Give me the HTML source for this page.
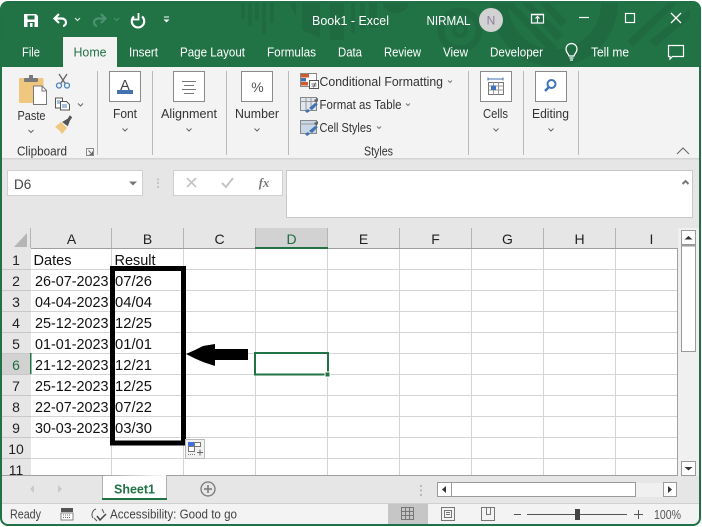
<!DOCTYPE html>
<html><head><meta charset="utf-8"><style>
html,body{margin:0;padding:0;background:#fff;width:702px;height:527px;overflow:hidden}
svg{display:block}
text{font-family:"Liberation Sans",sans-serif;font-size:12.5px;fill:#333}
.t text{fill:#fff}
.h{font-size:14px;fill:#222;text-anchor:middle}
.c{font-size:14.300px;fill:#111}
.m{text-anchor:middle}
</style></head><body>
<svg width="702" height="527" viewBox="0 0 702 527" xmlns="http://www.w3.org/2000/svg">
<rect x="0" y="0" width="702" height="527" fill="#fff"/>
<rect x="1" y="2" width="699" height="523" rx="7" fill="#e6e6e6" stroke="#217346" stroke-width="2"/>
<path d="M1 67V9a7 7 0 0 1 7-7H693a7 7 0 0 1 7 7V67Z" fill="#217346"/>
<g fill="#1f6a41"><rect x="241" y="3" width="4" height="16"/><rect x="248" y="3" width="4" height="23"/><rect x="255" y="3" width="4" height="17"/><rect x="262" y="3" width="4" height="32"/><rect x="270" y="3" width="4" height="20"/><path d="M289 3h7v13zM302 3h18v35l-18-8zM330 3h14v37h-14zM351 3h4v30h-4zM360 3h5v26h-5zM369 3h8v25h-8zM383 3c3 14 22 14 26 0z"/>
<circle cx="460" cy="30" r="19" fill="none" stroke="#1f6a41" stroke-width="7"/><circle cx="460" cy="30" r="6" fill="none" stroke="#1f6a41" stroke-width="4"/>
<path d="M491 3A60 60 0 0 0 618 3H601A44 44 0 0 1 508 3Z"/>
<path d="M504 3h9l44 44-6 6zM522 3h9l32 32-6 6zM540 3h9l18 18-6 6zM668 3h9L633 47l-6-6zM690 9v9L655 47l-6-6z"/></g>
<!-- QAT -->
<path d="M24 14H36L38 16V27H24Z" fill="#fff"/><rect x="27.500" y="15.500" width="7" height="4" fill="#217346"/><rect x="27.500" y="22" width="7" height="5" fill="#217346"/><rect x="30" y="23" width="2.500" height="4" fill="#fff"/>
<g fill="none" stroke="#fff" stroke-width="2.200"><path d="M59 14l-4.500 4.500 4.500 4.500M55 18.500h7a4 4 0 0 1 4 4 3.500 3.500 0 0 1-3 3.500"/><path d="M134 16.500a6.200 6.200 0 1 0 8 0"/><path d="M138.500 13v6.500h-6" stroke-width="1.800"/></g>
<path d="M75 18l2.500 2.500L80 18" fill="none" stroke="#d5e4da" stroke-width="1.200"/>
<g fill="none" stroke="#4d9270" stroke-width="2.200"><path d="M101 14l4.500 4.500-4.500 4.500M105 18.500H98a4 4 0 0 0-4 4 3.500 3.500 0 0 0 3 3.500"/></g>
<path d="M114 18l2.500 2.500L119 18" fill="none" stroke="#4d9270"/>
<path d="M164 17h5" stroke="#fff" fill="none"/><path d="M163.500 19.500h6l-3 3z" fill="#fff"/>
<g class="t">
<text x="312" y="25" textLength="77" lengthAdjust="spacingAndGlyphs">Book1  -  Excel</text>
<text x="426.500" y="25" textLength="44" lengthAdjust="spacingAndGlyphs">NIRMAL</text>
<text x="22" y="56.500" textLength="18" lengthAdjust="spacingAndGlyphs">File</text>
<text x="129" y="56.500" textLength="29" lengthAdjust="spacingAndGlyphs">Insert</text>
<text x="180" y="56.500" textLength="65" lengthAdjust="spacingAndGlyphs">Page Layout</text>
<text x="267" y="56.500" textLength="49" lengthAdjust="spacingAndGlyphs">Formulas</text>
<text x="338" y="56.500" textLength="24" lengthAdjust="spacingAndGlyphs">Data</text>
<text x="384" y="56.500" textLength="37" lengthAdjust="spacingAndGlyphs">Review</text>
<text x="443" y="56.500" textLength="25" lengthAdjust="spacingAndGlyphs">View</text>
<text x="490" y="56.500" textLength="53" lengthAdjust="spacingAndGlyphs">Developer</text>
<text x="591" y="56.500" textLength="38" lengthAdjust="spacingAndGlyphs">Tell me</text>
</g>
<circle cx="491" cy="20" r="12" fill="#d2d2d2"/><text x="491" y="24.500" class="m" style="fill:#8a7f9a;font-size:12px">N</text>
<g fill="none" stroke="#fff" stroke-width="1.200"><rect x="531.500" y="14.500" width="12" height="8.500"/><path d="M537.500 22.500v-5.500M535.500 18.500l2-2 2 2"/><path d="M531 14.500h13" stroke-width="1.500"/><path d="M579 17.500h10"/><rect x="625.500" y="13.500" width="9" height="9"/><path d="M671 13l10 10M681 13l-10 10" stroke-width="1.300"/><path d="M569 56c0-2-3-3-3-7a5.500 5.500 0 0 1 11 0c0 4-3 5-3 7zM569.500 58h4M570 60h3"/><path d="M668.500 45.500h15v11h-11l-2.500 2.500v-2.500h-1.500z"/></g>
<!-- Ribbon -->
<rect x="2" y="67" width="697" height="92" fill="#f3f3f3"/>
<rect x="2" y="158" width="697" height="1.500" fill="#d4d4d4"/>
<rect x="63" y="37" width="54" height="31" fill="#f3f3f3"/>
<text x="73.500" y="56.500" textLength="33" lengthAdjust="spacingAndGlyphs" style="fill:#217346">Home</text>
<g fill="#b9b9b9"><rect x="97" y="71" width="1" height="84"/><rect x="152" y="71" width="1" height="84"/><rect x="226" y="71" width="1" height="84"/><rect x="288" y="71" width="1" height="84"/><rect x="468" y="71" width="1" height="84"/><rect x="523" y="71" width="1" height="84"/><rect x="578" y="71" width="1" height="84"/></g>
<!-- Clipboard -->
<rect x="19" y="78" width="24.500" height="25" rx="1" fill="#efc77f"/>
<rect x="24" y="78" width="14" height="4" rx="1" fill="#7a7a7a"/><rect x="29" y="75" width="4" height="3.500" fill="#7a7a7a"/>
<path d="M33.500 86H42L46.500 90.500V104.500H33.500Z" fill="#fff" stroke="#777"/>
<path d="M42 86v5h4.500" fill="none" stroke="#777"/>
<text x="17.500" y="120" textLength="28" lengthAdjust="spacingAndGlyphs">Paste</text>
<path d="M28.500 130l2.500 2.500 2.500-2.500" fill="none" stroke="#666"/>
<g fill="none" stroke="#666" stroke-width="1.300"><path d="M59 74l6.500 10M67 74l-6.500 10"/></g>
<g fill="none" stroke="#4b82bd" stroke-width="1.300"><circle cx="59" cy="85.500" r="2.500"/><circle cx="67" cy="85.500" r="2.500"/></g>
<g fill="#fff" stroke="#555"><rect x="55.500" y="98" width="7" height="10"/><path d="M60.500 101.500h6l3 3v5.500h-9z"/></g><path d="M62 105h5M62 107h5M57 101h3M57 103h3" stroke="#4b82bd"/>
<path d="M78 103.500l2.500 2.500 2.500-2.500" fill="none" stroke="#666"/>
<path d="M55 127l6-5 6 6-5 6c-2-3-4-5-7-7z" fill="#efc77f"/><path d="M63 122l5-3 2-3 1.500 1.500-2 3-2 5z" fill="#555" stroke="#555"/>
<text x="17" y="155.500" textLength="50" lengthAdjust="spacingAndGlyphs">Clipboard</text>
<path d="M86.500 148.500h7v7h-7z" fill="none" stroke="#888"/><path d="M88.500 150.500l4 4M92.500 151.500v3h-3" fill="none" stroke="#666"/>
<!-- Big group buttons -->
<g fill="#fff" stroke="#8a8a8a"><rect x="109.500" y="71.500" width="31" height="30"/><rect x="173.500" y="71.500" width="31" height="30"/><rect x="241.500" y="71.500" width="31" height="30"/><rect x="480.500" y="71.500" width="31" height="30"/><rect x="535.500" y="71.500" width="31" height="30"/></g>
<text x="125" y="90" class="m" style="font-size:14.500px;fill:#444">A</text><rect x="117" y="90" width="16" height="4" fill="#4272b0"/>
<path d="M182 81.500h14M184 85.500h10M182 89.500h14M184 93.500h10" stroke="#777" fill="none"/>
<text x="257.500" y="92" class="m" style="font-size:14px;fill:#555">%</text>
<text x="113" y="118" textLength="24" lengthAdjust="spacingAndGlyphs">Font</text>
<text x="161" y="118" textLength="56" lengthAdjust="spacingAndGlyphs">Alignment</text>
<text x="235" y="118" textLength="44" lengthAdjust="spacingAndGlyphs">Number</text>
<text x="483" y="118" textLength="25" lengthAdjust="spacingAndGlyphs">Cells</text>
<text x="532" y="118" textLength="37" lengthAdjust="spacingAndGlyphs">Editing</text>
<g fill="none" stroke="#666"><path d="M122.500 128.500l2.500 2.500 2.500-2.500M186.500 128.500l2.500 2.500 2.500-2.500M254.500 128.500l2.500 2.500 2.500-2.500M493.500 128.500l2.500 2.500 2.500-2.500M548.500 128.500l2.500 2.500 2.500-2.500"/></g>
<!-- Styles -->
<rect x="300.500" y="73.500" width="16" height="13" fill="#fff" stroke="#888"/><rect x="301" y="74" width="8" height="3.500" fill="#d1592e"/><rect x="301" y="78" width="5" height="3.500" fill="#4272b0"/><rect x="301" y="82" width="7" height="3.500" fill="#d1592e"/>
<rect x="309.500" y="80.500" width="9" height="8" fill="#fff" stroke="#555"/><path d="M311.500 84h5M311.500 86h5M315.500 82.500l-2 5" stroke="#444" stroke-width=".7"/>
<g><rect x="300.500" y="97.500" width="16" height="13" fill="#dfe6f0" stroke="#888"/><path d="M300.500 101.500h16M306 97.500v13M311 97.500v13" stroke="#999" fill="none"/><rect x="300.500" y="120.500" width="16" height="13" fill="#c8d6e8" stroke="#888"/><path d="M300.500 124h16" stroke="#999"/>
<path d="M309 108l6-5 3 1-6 6zM305 111l3-2 2 2-3 2z" fill="#4272b0"/><path d="M309 131l6-5 3 1-6 6zM305 134l3-2 2 2-3 2z" fill="#4272b0"/><path d="M314 100l4-2v3l-2 2z" fill="#666"/><path d="M314 123l4-2v3l-2 2z" fill="#666"/></g>
<text x="319.500" y="86" textLength="123.500" lengthAdjust="spacingAndGlyphs">Conditional Formatting</text>
<text x="319.500" y="109" textLength="82" lengthAdjust="spacingAndGlyphs">Format as Table</text>
<text x="319.500" y="132" textLength="52" lengthAdjust="spacingAndGlyphs">Cell Styles</text>
<g fill="none" stroke="#777"><path d="M448 80.500l2 2 2-2M406 103.500l2 2 2-2M377 126.500l2 2 2-2"/></g>
<text x="364" y="155.500" textLength="29" lengthAdjust="spacingAndGlyphs">Styles</text>
<!-- cells icon -->
<rect x="488.500" y="82.500" width="15" height="12" fill="#fff" stroke="#777"/><path d="M488.500 86h15M488.500 90h15M493.500 82.500v12M498.500 82.500v12" stroke="#999" fill="none"/><rect x="491" y="85.500" width="5" height="4.500" fill="#3f74b8"/><path d="M488 79h15M488 77.500v3M503 77.500v3" stroke="#4272b0" fill="none"/>
<circle cx="551.500" cy="84" r="4" fill="none" stroke="#3f74b8" stroke-width="2"/><path d="M548.500 87.500l-3.500 3.500" stroke="#3f74b8" stroke-width="2.500"/>
<path d="M677 154l6-6 6 6" fill="none" stroke="#666"/>
<!-- Formula bar -->
<rect x="7.500" y="170.500" width="135" height="25" fill="#fff" stroke="#d0d0d0"/>
<text x="14" y="189" style="font-size:13.500px;fill:#444">D6</text>
<path d="M129 181.500h8l-4 4z" fill="#777"/>
<path d="M158 178.500v2M158 182v2M158 186v2" stroke="#b8b8b8" stroke-width="1.500"/>
<rect x="173.500" y="170.500" width="109" height="25" fill="#fff" stroke="#d0d0d0"/>
<path d="M187 178l9 9M196 178l-9 9" stroke="#c4c4c4" stroke-width="1.600" fill="none"/>
<path d="M222 183l4 4 7-9" stroke="#c4c4c4" stroke-width="2" fill="none"/>
<text x="264" y="187" class="m" style="font-family:'Liberation Serif',serif;font-size:12.500px;font-style:italic;font-weight:bold;fill:#777">fx</text>
<rect x="286.500" y="170.500" width="406" height="47" fill="#fff" stroke="#c8c8c8"/>
<path d="M682.500 184l3-3 3 3" fill="none" stroke="#777" stroke-width="2"/>
<!-- Sheet -->
<rect x="2" y="228" width="675" height="20" fill="#e6e6e6"/>
<rect x="2" y="248" width="29" height="227" fill="#e6e6e6"/>
<rect x="31" y="249" width="646" height="226" fill="#fff"/>
<rect x="255" y="228" width="73" height="20" fill="#d2d2d2"/>
<rect x="2" y="353" width="29" height="21" fill="#d2d2d2"/>
<path d="M27 233V247H14Z" fill="#b5b5b5"/>
<path d="M31 269.500H677M31 290.500H677M31 311.500H677M31 332.500H677M31 353.500H677M31 374.500H677M31 395.500H677M31 416.500H677M31 437.500H677M31 458.500H677M111.500 249V475M183.500 249V475M255.500 249V475M327.500 249V475M399.500 249V475M471.500 249V475M543.500 249V475M615.500 249V475" stroke="#d4d4d4" fill="none"/>
<path d="M2 269.500H31M2 290.500H31M2 311.500H31M2 332.500H31M2 353.500H31M2 374.500H31M2 395.500H31M2 416.500H31M2 437.500H31M2 458.500H31" stroke="#c8c8c8" fill="none"/>
<path d="M30.500 228V248M111.500 228V248M183.500 228V248M255.500 228V248M327.500 228V248M399.500 228V248M471.500 228V248M543.500 228V248M615.500 228V248" stroke="#b4b4b4" fill="none"/>
<path d="M31 248.500H677M677.500 248V476M2 475.500H677" stroke="#a0a0a0" fill="none"/>
<rect x="30" y="353" width="1.500" height="21" fill="#217346"/><rect x="255" y="247" width="73" height="2" fill="#217346"/>
<g><text class="h" x="71.500" y="244">A</text><text class="h" x="147.500" y="244">B</text><text class="h" x="219.500" y="244">C</text><text class="h" x="291.500" y="244" style="fill:#1f6b42">D</text><text class="h" x="363.500" y="244">E</text><text class="h" x="435.500" y="244">F</text><text class="h" x="507.500" y="244">G</text><text class="h" x="579.500" y="244">H</text><text class="h" x="651.500" y="244">I</text>
<text class="h" x="16" y="265">1</text><text class="h" x="16" y="286">2</text><text class="h" x="16" y="307">3</text><text class="h" x="16" y="328">4</text><text class="h" x="16" y="349">5</text><text class="h" x="16" y="370" style="fill:#1f6b42">6</text><text class="h" x="16" y="391">7</text><text class="h" x="16" y="412">8</text><text class="h" x="16" y="433">9</text><text class="h" x="16" y="454">10</text><text class="h" x="16" y="475">11</text></g>
<text class="c" x="33.500" y="265" textLength="38" lengthAdjust="spacingAndGlyphs">Dates</text><text class="c" x="114.500" y="265" textLength="41" lengthAdjust="spacingAndGlyphs">Result</text>
<text class="c" x="35" y="286" textLength="73.500" lengthAdjust="spacingAndGlyphs">26-07-2023</text><text class="c" x="115" y="286" textLength="37" lengthAdjust="spacingAndGlyphs">07/26</text>
<text class="c" x="35" y="307" textLength="73.500" lengthAdjust="spacingAndGlyphs">04-04-2023</text><text class="c" x="115" y="307" textLength="37" lengthAdjust="spacingAndGlyphs">04/04</text>
<text class="c" x="35" y="328" textLength="73.500" lengthAdjust="spacingAndGlyphs">25-12-2023</text><text class="c" x="115" y="328" textLength="37" lengthAdjust="spacingAndGlyphs">12/25</text>
<text class="c" x="35" y="349" textLength="73.500" lengthAdjust="spacingAndGlyphs">01-01-2023</text><text class="c" x="115" y="349" textLength="37" lengthAdjust="spacingAndGlyphs">01/01</text>
<text class="c" x="35" y="370" textLength="73.500" lengthAdjust="spacingAndGlyphs">21-12-2023</text><text class="c" x="115" y="370" textLength="37" lengthAdjust="spacingAndGlyphs">12/21</text>
<text class="c" x="35" y="391" textLength="73.500" lengthAdjust="spacingAndGlyphs">25-12-2023</text><text class="c" x="115" y="391" textLength="37" lengthAdjust="spacingAndGlyphs">12/25</text>
<text class="c" x="35" y="412" textLength="73.500" lengthAdjust="spacingAndGlyphs">22-07-2023</text><text class="c" x="115" y="412" textLength="37" lengthAdjust="spacingAndGlyphs">07/22</text>
<text class="c" x="35" y="433" textLength="73.500" lengthAdjust="spacingAndGlyphs">30-03-2023</text><text class="c" x="115" y="433" textLength="37" lengthAdjust="spacingAndGlyphs">03/30</text>
<!-- selection -->
<rect x="255" y="353" width="73" height="21.500" fill="none" stroke="#217346" stroke-width="2"/>
<rect x="325" y="372" width="5" height="5" fill="#217346" stroke="#fff"/>
<!-- black annotation -->
<rect x="112.500" y="268.500" width="71" height="174.500" fill="none" stroke="#000" stroke-width="5"/>
<path d="M186 354L195 350L203 346L215 344V349H248V360H215V366L203 362L195 358.500Z" fill="#000"/>
<!-- paste options -->
<rect x="185.500" y="439.500" width="19" height="19" fill="#f2f2f2" stroke="#bbb"/>
<rect x="188.500" y="442.500" width="6" height="4" fill="#3f74dc" stroke="#3f74dc"/><rect x="194.500" y="442.500" width="6" height="4" fill="#fff" stroke="#777"/><rect x="188.500" y="446.500" width="6" height="5" fill="#fff" stroke="#777"/>
<path d="M188 454.500h8" stroke="#777" stroke-dasharray="1 1"/><path d="M197 452.500h6M200 449.500v6" stroke="#666" fill="none"/>
<!-- Scrollbar -->
<rect x="678" y="228" width="21" height="248" fill="#f0f0f0"/>
<rect x="681.500" y="230.500" width="14" height="14" fill="#fff" stroke="#9a9a9a"/>
<path d="M684.500 239.500l4-3.500 4 3.500z" fill="#333"/>
<rect x="681.500" y="245.500" width="14" height="106" fill="#fff" stroke="#9a9a9a"/><rect x="681" y="245" width="15" height="1.500" fill="#9a9a9a"/>
<rect x="681.500" y="461.500" width="14" height="14" fill="#fff" stroke="#9a9a9a"/>
<path d="M684.500 467l4 3.500 4-3.500z" fill="#333"/>
<!-- Tabs row -->
<rect x="2" y="476" width="697" height="27" fill="#e6e6e6"/>
<path d="M2 475.500H102M167 475.500H677" stroke="#a0a0a0"/>
<path d="M102.500 476V499H166.500V475" fill="#fff" stroke="#b0b0b0"/>
<rect x="102" y="498" width="65" height="2" fill="#217346"/>
<text x="114" y="493.500" textLength="41" lengthAdjust="spacingAndGlyphs" style="font-weight:bold;font-size:13px;fill:#217346">Sheet1</text>
<path d="M34 485l-4 4 4 4zM58 485l4 4-4 4z" fill="#c9c9c9"/>
<circle cx="208" cy="489" r="7" fill="none" stroke="#777" stroke-width="1.300"/><path d="M204 489h8M208 485v8" stroke="#777" stroke-width="1.500"/>
<path d="M421 485v2M421 489.500v2M421 494v2" stroke="#b8b8b8" stroke-width="2"/>
<rect x="437.500" y="482.500" width="14" height="14" fill="#fff" stroke="#9a9a9a"/><path d="M446 486v7l-4-3.500z" fill="#333"/>
<rect x="451.500" y="482.500" width="184" height="14" fill="#fff" stroke="#9a9a9a"/><rect x="636" y="483" width="27" height="14" fill="#f0f0f0"/>
<rect x="663.500" y="482.500" width="13" height="14" fill="#fff" stroke="#9a9a9a"/><path d="M668 486v7l4-3.500z" fill="#333"/>
<!-- Status bar -->
<path d="M2 503H699V517a7 7 0 0 1-7 7H9a7 7 0 0 1-7-7Z" fill="#f3f3f3"/>
<path d="M2 503.500H699" stroke="#d0d0d0"/>
<text x="10" y="518.500" textLength="31" lengthAdjust="spacingAndGlyphs" style="fill:#444">Ready</text>
<rect x="61" y="508" width="12" height="4" fill="#555"/><rect x="61" y="513" width="12" height="7" fill="#fff" stroke="#666" stroke-width=".8"/><path d="M63 515h8M63 517.500h8" stroke="#666" stroke-dasharray="1 1"/>
<path d="M96 509a6 6 0 0 0-3 9M102 509l2 4M94 518l3 3" fill="none" stroke="#555"/><path d="M97 516l3 4 6-6" fill="none" stroke="#444" stroke-width="1.500"/>
<text x="110" y="518.500" textLength="127" lengthAdjust="spacingAndGlyphs" style="fill:#444">Accessibility: Good to go</text>
<rect x="388" y="504" width="40" height="20" fill="#c6c6c6"/>
<path d="M401.500 507.500h12v12h-12zM405.500 507.500v12M409.500 507.500v12M401.500 511.500h12M401.500 515.500h12" fill="none" stroke="#777"/>
<path d="M441.500 507.500h13v13h-13z" fill="none" stroke="#777"/><path d="M444.500 510.500h7v7h-7zM446 512.500h4M446 514.500h4" fill="none" stroke="#777"/>
<path d="M481.500 507.500h13v13h-13zM486.500 507.500v7h4v-7" fill="none" stroke="#777"/>
<path d="M514 514.500h7M527 514.500h100M634 514.500h9M638.500 510v9" stroke="#555" fill="none"/>
<rect x="575" y="509" width="5" height="11" fill="#444"/>
<text x="654" y="519" textLength="27" lengthAdjust="spacingAndGlyphs" style="fill:#555">100%</text>
<path d="M1 9a7 7 0 0 1 7-7H693a7 7 0 0 1 7 7V518a7 7 0 0 1-7 7H8a7 7 0 0 1-7-7Z" fill="none" stroke="#217346" stroke-width="1.500"/>
</svg>
</body></html>
